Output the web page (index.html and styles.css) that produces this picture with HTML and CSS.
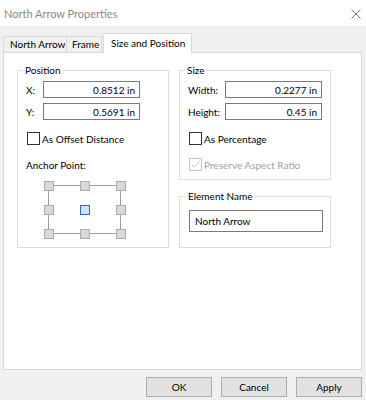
FILE: index.html
```html
<!DOCTYPE html>
<html>
<head>
<meta charset="utf-8">
<link rel="stylesheet" href="styles.css">
</head>
<body>
<div class="titlebar">
  <span class="title">North Arrow Properties</span>
  <svg class="close" width="10" height="10" viewBox="0 0 10 10"><path d="M0.5 0.5 L9.5 9.5 M9.5 0.5 L0.5 9.5" stroke="#707070" stroke-width="1" fill="none"/></svg>
</div>
<div class="tabs">
  <div class="tab tab-na">North Arrow</div>
  <div class="tab tab-frame">Frame</div>
  <div class="tab active">Size and Position</div>
</div>
<div class="page">
  <div class="cols">
    <fieldset class="group pos">
      <legend>Position</legend>
      <div class="field first"><span class="lbl lbl-xy">X:</span><input class="num" value="0.8512 in" readonly></div>
      <div class="field"><span class="lbl lbl-xy">Y:</span><input class="num" value="0.5691 in" readonly></div>
      <div class="check first-check"><span class="cb"></span><span>As Offset Distance</span></div>
      <div class="anchor-label">Anchor Point:</div>
      <svg class="anchor" width="82" height="58" viewBox="0 0 82 58">
        <g stroke="#a0a0a0" stroke-width="1" fill="none">
          <path d="M10 4.5 H36 M46 4.5 H72 M10 52.5 H36 M46 52.5 H72 M4.5 10 V24 M4.5 34 V48 M76.5 10 V24 M76.5 34 V48"/>
        </g>
        <g fill="#dadada" stroke="#ababab" stroke-width="1">
          <rect x="0.5" y="0.5" width="9" height="9"/>
          <rect x="36.5" y="0.5" width="9" height="9"/>
          <rect x="72.5" y="0.5" width="9" height="9"/>
          <rect x="0.5" y="24.5" width="9" height="9"/>
          <rect x="72.5" y="24.5" width="9" height="9"/>
          <rect x="0.5" y="48.5" width="9" height="9"/>
          <rect x="36.5" y="48.5" width="9" height="9"/>
          <rect x="72.5" y="48.5" width="9" height="9"/>
        </g>
        <rect x="36.5" y="24.5" width="9" height="9" fill="#cce4f7" stroke="#2a6ebb" stroke-width="1"/>
      </svg>
    </fieldset>
    <div class="rightcol">
      <fieldset class="group size">
        <legend>Size</legend>
        <div class="field first"><span class="lbl lbl-wh">Width:</span><input class="num" value="0.2277 in" readonly></div>
        <div class="field"><span class="lbl lbl-wh">Height:</span><input class="num" value="0.45 in" readonly></div>
        <div class="check first-check"><span class="cb"></span><span>As Percentage</span></div>
        <div class="check second-check disabled"><span class="cb cb-dis"><svg width="11" height="11" viewBox="0 0 11 11"><path d="M1.5 5.5 L4 8 L9.5 2.5" stroke="#c4c4c4" stroke-width="1" fill="none"/></svg></span><span>Preserve Aspect Ratio</span></div>
      </fieldset>
      <fieldset class="group name">
        <legend>Element Name</legend>
        <input class="text" value="North Arrow" readonly>
      </fieldset>
    </div>
  </div>
</div>
<div class="buttons">
  <button class="btn">OK</button>
  <button class="btn">Cancel</button>
  <button class="btn">Apply</button>
</div>
</body>
</html>
```

FILE: styles.css
```css
* { box-sizing: border-box; }
html, body {
  margin: 0;
  padding: 0;
}
body {
  width: 366px;
  height: 400px;
  background: #f0f0f0;
  font-family: Lato, "Liberation Sans", sans-serif;
  font-size: 10px;
  color: #000;
  overflow: hidden;
}
.titlebar {
  height: 26px;
  background: #fff;
  display: flex;
  align-items: center;
  justify-content: space-between;
  padding: 0 5px 0 4px;
}
.title {
  color: #8a8a8a;
  font-size: 11px;
}
.close { display: block; margin-top: 1px; }

.tabs {
  display: flex;
  align-items: flex-end;
  height: 19px;
  margin-top: 7px;
  padding-left: 3px;
}
.tab {
  height: 16px;
  line-height: 15px;
  border: 1px solid #d9d9d9;
  border-bottom: none;
  background: #f0f0f0;
  white-space: nowrap;
}
.tab-na { width: 64px; padding-left: 6px; }
.tab-frame { width: 36px; padding-left: 5px; margin-left: -1px; }
.tab.active {
  width: 89px;
  height: 20px;
  margin-bottom: -1px;
  margin-left: 1px;
  padding: 2px 0 0 7px;
  line-height: 14px;
  background: #fff;
  position: relative;
  z-index: 1;
}

.page {
  margin-left: 3px;
  width: 359px;
  height: 318px;
  border: 1px solid #d9d9d9;
  background: #fff;
  padding: 10px 0 0 13px;
}
.cols {
  display: flex;
  gap: 10px;
  align-items: flex-start;
}
.rightcol {
  display: flex;
  flex-direction: column;
  gap: 9px;
}
.group {
  margin: 0;
  width: 152px;
  min-width: 0;
  border: 1px solid #dcdcdc;
  padding: 0 8px 8px 8px;
}
.group legend {
  padding: 0 2px;
  margin-left: -3px;
  line-height: 14px;
}
.field {
  display: flex;
  align-items: center;
  margin-top: 5px;
}
.field.first { margin-top: 4px; }
.lbl { display: block; }
.lbl-xy { width: 17px; }
.lbl-wh { width: 37px; }
.num {
  width: 97px;
  height: 17px;
  border: 1px solid #7a7a7a;
  padding: 0 4px 0 0;
  text-align: right;
  font: inherit;
  color: #000;
  background: #fff;
  outline: none;
}
.check {
  display: flex;
  align-items: center;
  gap: 2px;
  height: 13px;
  margin-left: 1px;
}
.first-check { margin-top: 12px; }
.second-check { margin-top: 13px; }
.cb {
  width: 13px;
  height: 13px;
  border: 1px solid #333;
  background: #fff;
  display: block;
  flex: none;
}
.cb-dis {
  border-color: #c4c4c4;
}
.cb svg { display: block; margin: 0; }
.disabled { color: #a0a0a0; }
.anchor-label {
  margin-top: 13px;
  line-height: 14px;
}
.anchor {
  display: block;
  margin: 9px 0 0 18px;
}
.pos { height: 185px; }
.size { height: 117px; }
.name { height: 59px; padding-left: 9px; }
.text {
  display: block;
  margin-top: 7px;
  width: 134px;
  height: 22px;
  border: 1px solid #7a7a7a;
  padding: 0 0 0 5px;
  font: inherit;
  color: #000;
  background: #fff;
  outline: none;
}
.buttons {
  display: flex;
  justify-content: flex-end;
  gap: 9px;
  margin-top: 7px;
  padding-right: 4px;
}
.btn {
  width: 66px;
  height: 20px;
  border: 1px solid #adadad;
  background: #e1e1e1;
  font: inherit;
  color: #000;
  padding: 0;
  margin: 0;
}
```
